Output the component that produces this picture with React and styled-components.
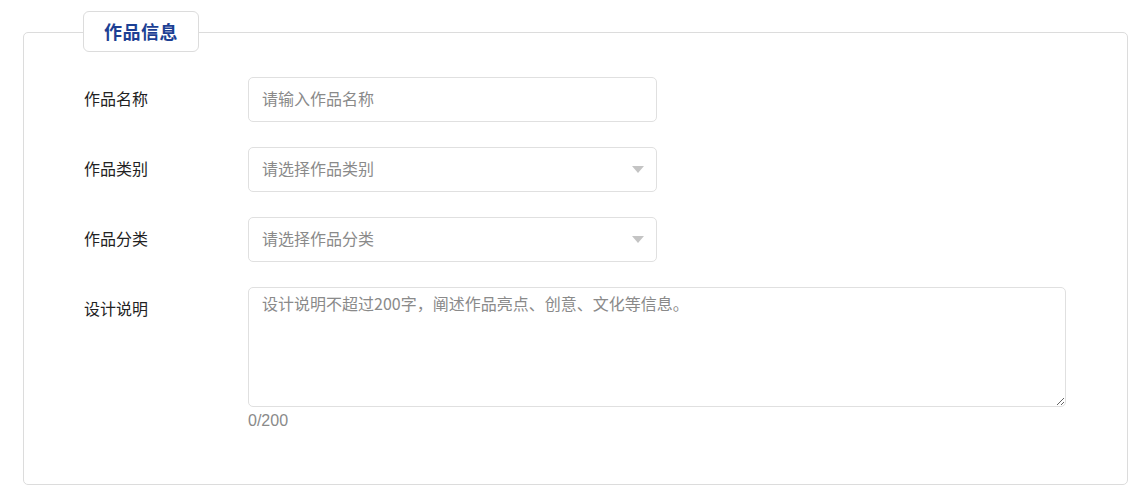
import React from "react";
import styled, { createGlobalStyle } from "styled-components";

const Global = createGlobalStyle`
  html, body { margin: 0; padding: 0; background: #fff; }
  body { font-family: "PingFang SC", "Noto Sans CJK SC", "Noto Sans", sans-serif; }
  * { box-sizing: border-box; }
`;

const Page = styled.div`
  padding: 32px 0 0 23px;
`;

const Panel = styled.section`
  position: relative;
  width: 1105px;
  height: 453px;
  border: 1px solid #dcdcdc;
  border-radius: 5px;
  padding: 44px 0 0 60px;
`;

const TitleTab = styled.div`
  position: absolute;
  top: -22px;
  left: 59px;
  width: 116px;
  height: 41px;
  background: #fff;
  border: 1px solid #dcdcdc;
  border-radius: 6px;
  display: flex;
  align-items: center;
  justify-content: center;
  padding-bottom: 1px;
  font-size: 18px;
  font-weight: 700;
  color: #1c3f94;
  letter-spacing: 0.5px;
`;

const Form = styled.div`
  display: flex;
  flex-direction: column;
  gap: 25px;
`;

const Row = styled.div`
  display: grid;
  grid-template-columns: 164px 1fr;
  align-items: start;
`;

const Label = styled.div`
  height: 45px;
  line-height: 43px;
  font-size: 16px;
  color: #222;
`;

const Field = styled.div`
  width: ${(p) => p.$w}px;
  height: 45px;
  border: 1px solid #e0e0e0;
  border-radius: 5px;
  display: flex;
  align-items: center;
  justify-content: space-between;
  padding: 0 12px 3px 13px;
  font-size: 16px;
  color: #8a8a8a;
`;

const Caret = styled.span`
  margin-top: 3px;
  width: 0;
  height: 0;
  border-left: 6px solid transparent;
  border-right: 6px solid transparent;
  border-top: 7px solid #c4c4c4;
`;

const AreaCol = styled.div`
  display: flex;
  flex-direction: column;
`;

const TextArea = styled.textarea`
  width: 818px;
  height: 120px;
  border: 1px solid #e0e0e0;
  border-radius: 5px;
  padding: 3px 13px;
  font-family: inherit;
  font-size: 16px;
  line-height: 24px;
  color: #333;
  outline: none;
  &::placeholder { color: #8a8a8a; }
`;

const Counter = styled.div`
  margin-top: 5px;
  font-size: 16px;
  color: #8a8a8a;
  font-family: "Helvetica Neue", "Liberation Sans", "Noto Sans CJK SC", sans-serif;
`;

export default function App() {
  return (
    <Page>
      <Global />
      <Panel>
        <TitleTab>作品信息</TitleTab>
        <Form>
          <Row>
            <Label>作品名称</Label>
            <Field $w={409}>请输入作品名称</Field>
          </Row>
          <Row>
            <Label>作品类别</Label>
            <Field $w={409}>
              请选择作品类别
              <Caret />
            </Field>
          </Row>
          <Row>
            <Label>作品分类</Label>
            <Field $w={409}>
              请选择作品分类
              <Caret />
            </Field>
          </Row>
          <Row>
            <Label>设计说明</Label>
            <AreaCol>
              <TextArea placeholder="设计说明不超过200字，阐述作品亮点、创意、文化等信息。" />
              <Counter>0/200</Counter>
            </AreaCol>
          </Row>
        </Form>
      </Panel>
    </Page>
  );
}
